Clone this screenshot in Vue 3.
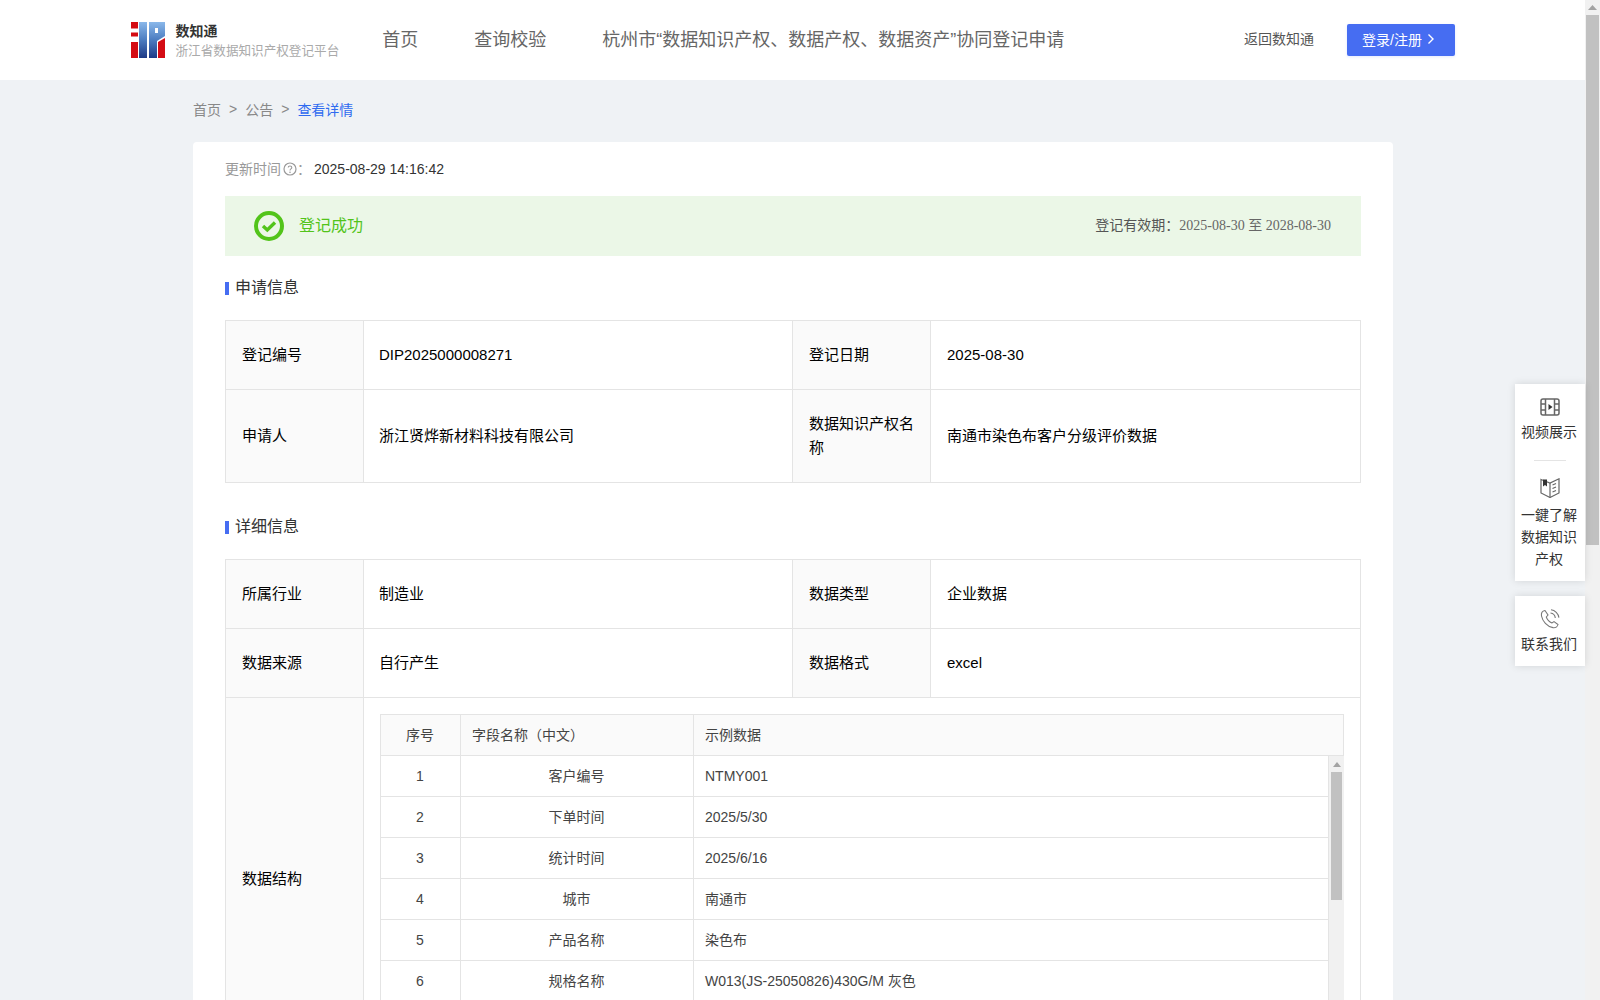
<script setup>
const nav = ['首页', '查询校验', '杭州市“数据知识产权、数据产权、数据资产”协同登记申请']
const fields = [
  ['1', '客户编号', 'NTMY001'],
  ['2', '下单时间', '2025/5/30'],
  ['3', '统计时间', '2025/6/16'],
  ['4', '城市', '南通市'],
  ['5', '产品名称', '染色布'],
  ['6', '规格名称', 'W013(JS-25050826)430G/M 灰色'],
  ['', '', '']
]
</script>

<template>
  <div class="shell">
    <div class="page">
      <header class="topbar">
        <div class="brand">
          <svg class="logo" viewBox="0 0 34 36" width="34" height="36">
            <defs>
              <linearGradient id="lg" x1="0" y1="0" x2="0" y2="1">
                <stop offset="0" stop-color="#8ab8ea" />
                <stop offset="0.5" stop-color="#4c7cc0" />
                <stop offset="1" stop-color="#1d3a86" />
              </linearGradient>
            </defs>
            <rect x="0" y="0" width="7" height="6.5" fill="#d40c14" />
            <rect x="0" y="10.5" width="7" height="4" fill="#d40c14" />
            <rect x="0" y="20" width="7" height="16" fill="#d40c14" />
            <rect x="8" y="0" width="8" height="36" fill="url(#lg)" />
            <path d="M18 0H34V14L26 19V36H18Z" fill="url(#lg)" />
            <rect x="24" y="6" width="3" height="5" fill="#fff" />
            <path d="M27 36V20L34 16V36Z" fill="#d40c14" />
          </svg>
          <div class="brand-text">
            <div class="brand-name">数知通</div>
            <div class="brand-sub">浙江省数据知识产权登记平台</div>
          </div>
        </div>
        <nav class="nav">
          <span v-for="n in nav" :key="n" class="nav-item">{{ n }}</span>
        </nav>
        <span class="back">返回数知通</span>
        <button class="login"><span>登录/注册</span>
          <svg width="8" height="12" viewBox="0 0 8 12"><path d="M1.5 1.5L6 6L1.5 10.5" fill="none" stroke="#fff" stroke-width="1.4" /></svg>
        </button>
      </header>

      <main class="content">
        <div class="crumbs">
          <span>首页</span><i>&gt;</i><span>公告</span><i>&gt;</i><span class="cur">查看详情</span>
        </div>
        <section class="card">
          <div class="updated">
            <span class="muted">更新时间</span>
            <svg class="help" width="14" height="14" viewBox="0 0 14 14">
              <circle cx="7" cy="7" r="6" fill="none" stroke="#999" stroke-width="1.2" />
              <path d="M5.2 5.6C5.2 3.4 8.8 3.5 8.8 5.5C8.8 6.9 7 6.8 7 8.4" fill="none" stroke="#999" stroke-width="1.1" />
              <circle cx="7" cy="10.2" r="0.8" fill="#999" />
            </svg>
            <span class="muted">：</span>
            <span class="time">2025-08-29 14:16:42</span>
          </div>

          <div class="status">
            <svg width="30" height="30" viewBox="0 0 30 30">
              <circle cx="15" cy="15" r="13" fill="none" stroke="#52c41a" stroke-width="4" />
              <path d="M9 15L13.3 19L21 11.5" fill="none" stroke="#52c41a" stroke-width="3.4" />
            </svg>
            <span class="status-text">登记成功</span>
            <span class="validity">登记有效期：<span class="serif">2025-08-30 至 2028-08-30</span></span>
          </div>

          <h3 class="sec first">申请信息</h3>
          <div class="grid">
            <div class="lab h69">登记编号</div><div class="val">DIP2025000008271</div>
            <div class="lab">登记日期</div><div class="val end">2025-08-30</div>
            <div class="lab h93">申请人</div><div class="val">浙江贤烨新材料科技有限公司</div>
            <div class="lab">数据知识产权名称</div><div class="val end">南通市染色布客户分级评价数据</div>
          </div>

          <h3 class="sec second">详细信息</h3>
          <div class="grid">
            <div class="lab h69">所属行业</div><div class="val">制造业</div>
            <div class="lab">数据类型</div><div class="val end">企业数据</div>
            <div class="lab h69">数据来源</div><div class="val">自行产生</div>
            <div class="lab">数据格式</div><div class="val end">excel</div>
            <div class="lab">数据结构</div>
            <div class="val wide">
              <div class="inner">
                <div class="inner-head">
                  <div class="c1">序号</div><div class="c2 left">字段名称（中文）</div><div class="c3">示例数据</div>
                </div>
                <div class="inner-body">
                  <div class="inner-rows">
                    <div v-for="(r, i) in fields" :key="i" class="inner-row">
                      <div class="c1">{{ r[0] }}</div><div class="c2">{{ r[1] }}</div><div class="c3">{{ r[2] }}</div>
                    </div>
                  </div>
                  <div class="mini-bar">
                    <svg class="mini-arrow" width="8" height="5" viewBox="0 0 8 5"><path d="M4 0L8 5H0Z" fill="#a3a3a3" /></svg>
                    <div class="mini-thumb"></div>
                  </div>
                </div>
              </div>
            </div>
          </div>
        </section>
      </main>
    </div>

    <aside class="scrollbar">
      <svg class="arrow" width="9" height="5" viewBox="0 0 9 5"><path d="M4.5 0L9 5H0Z" fill="#a3a3a3" /></svg>
      <div class="thumb"></div>
    </aside>

    <div class="float">
      <div class="float-box">
        <div class="float-item first">
          <svg width="20" height="20" viewBox="0 0 20 20" fill="none" stroke="#666" stroke-width="1.5">
            <rect x="1" y="2" width="18" height="16" rx="2" />
            <path d="M5.5 2V18M14.5 2V18M1 7H5.5M1 13H5.5M14.5 7H19M14.5 13H19" />
            <path d="M8.5 7L12.5 10L8.5 13Z" fill="#333" stroke="none" />
          </svg>
          <span>视频展示</span>
        </div>
        <div class="float-line"></div>
        <div class="float-item tall">
          <svg width="20" height="20" viewBox="0 0 20 20" fill="none" stroke="#666" stroke-width="1.2">
            <path d="M1 1.5L10 5L19 .8V15L10 19.5L1 15Z" />
            <path d="M10 5V19.5M12.5 7L16 5.5M12.5 10.5L16 9M12.5 14L16 12.5" />
            <path d="M3 1.5H7V8.5L5 7L3 8.5Z" fill="#333" stroke="none" />
          </svg>
          <span>一鍵了解</span><span>数据知识</span><span>产权</span>
        </div>
      </div>
      <div class="float-box">
        <div class="float-item contact">
          <svg width="20" height="20" viewBox="0 0 20 20" fill="none" stroke="#777" stroke-width="1.1">
            <path d="M5 1.5C2.5 2 1 4 1.5 7C2.5 12 7 17.5 13 18.6C15.5 19 17.6 17.5 18 15.5L14 12.6L12 14C9.5 13 7 10 6.3 8L8 6Z" />
            <path d="M10.5 4C13 4.3 15 6.2 15.3 9M11 .8C15 1.2 18.4 4.5 18.9 8.6" />
          </svg>
          <span>联系我们</span>
        </div>
      </div>
    </div>
  </div>
</template>

<style scoped>
.shell {
  position: relative;
  display: flex;
  height: 1000px;
  overflow: hidden;
  font-family: "Liberation Sans", "Noto Sans CJK SC", sans-serif;
  color: #333;
  background: #eff2f5;
}
.page { flex: 1; min-width: 0; overflow: hidden; }
.topbar {
  display: flex;
  align-items: center;
  height: 80px;
  background: #fff;
  padding: 0 130px 0 131px;
}
.brand { display: flex; align-items: center; gap: 10.5px; }
.logo { display: block; }
.brand-name { font-size: 14px; line-height: 20px; font-weight: 700; color: #333; }
.brand-sub { font-size: 12.6px; line-height: 18px; color: #aaa; white-space: nowrap; margin-top: 1px; }
.nav { display: flex; gap: 56px; margin-left: 43px; flex: 1; }
.nav-item { font-size: 18px; color: #666; white-space: nowrap; padding-bottom: 4px; }
.back { font-size: 14px; color: #555; margin-right: 33px; padding-bottom: 4px; }
.login {
  display: flex;
  align-items: center;
  justify-content: center;
  gap: 5px;
  width: 108px;
  height: 32px;
  padding: 0 5px 3px 0;
  border: 0;
  border-radius: 2px;
  background: #466df2;
  color: #fff;
  font: inherit;
  font-size: 14px;
  box-shadow: 0 1px 3px rgba(70, 109, 242, .15);
}
.content { padding: 0 192px 0 193px; }
.crumbs {
  display: flex;
  align-items: center;
  height: 58px;
  padding-bottom: 4px;
  font-size: 14px;
  color: #888;
}
.crumbs i { font-style: normal; margin: 0 8px; }
.cur { color: #2f6bf0; }
.card {
  background: #fff;
  border-radius: 4px 4px 0 0;
  padding: 0 32px 30px;
}
.updated {
  display: flex;
  align-items: center;
  height: 54px;
  font-size: 14px;
}
.muted { color: #999; padding-bottom: 2px; }
.help { margin-left: 2px; }
.time { color: #333; margin-left: 3px; }
.status {
  display: flex;
  align-items: center;
  height: 60px;
  padding: 0 30px 0 29px;
  background: #ebf7e7;
}
.status-text { margin-left: 15px; font-size: 16px; color: #52c41a; flex: 1; padding-bottom: 4px; }
.validity { font-size: 14px; color: #555; padding-bottom: 4px; }
.serif { font-family: "Liberation Serif", "Noto Sans CJK SC", serif; color: #666; }
.sec {
  display: flex;
  align-items: center;
  margin: 0;
  font-size: 16px;
  font-weight: 400;
  line-height: 22px;
  color: #333;
}
.sec::before {
  content: "";
  width: 4px;
  height: 13px;
  margin-right: 6px;
  background: #466df2;
}
.sec.first { margin: 21px 0 21px; }
.sec.second { margin: 33px 0 21px; }
.grid {
  display: grid;
  grid-template-columns: 138px 429px 138px 430px;
  border-top: 1px solid #e4e4e4;
  border-left: 1px solid #e4e4e4;
  font-size: 15px;
  color: #000;
}
.lab, .val {
  display: flex;
  align-items: center;
  box-sizing: border-box;
  min-height: 68px;
  padding: 0 15px;
  line-height: 24px;
  border-bottom: 1px solid #e4e4e4;
  border-right: 1px solid #e4e4e4;
}
.lab { background: #fafafa; padding-left: 16px; }
.val.end { padding-left: 16px; }
.grid .h69 { height: 69px; }
.grid .h93 { height: 93px; }
.wide { grid-column: span 3; padding: 16px; display: block; }
.inner { border: 1px solid #e4e4e4; border-bottom: 0; font-size: 14px; color: #444; }
.inner-head { display: flex; height: 40px; border-bottom: 1px solid #e4e4e4; background: #fafafa; }
.inner-body { display: flex; margin-right: -1px; }
.inner-rows { flex: 1; min-width: 0; }
.inner-row { display: flex; height: 40px; border-bottom: 1px solid #e4e4e4; }
.c1, .c2, .c3 { display: flex; align-items: center; box-sizing: border-box; }
.c1 { width: 80px; justify-content: center; padding-right: 1px; border-right: 1px solid #e4e4e4; }
.c2 { width: 233px; justify-content: center; padding-right: 1px; border-right: 1px solid #e4e4e4; }
.c2.left { justify-content: flex-start; padding-left: 11px; }
.c3 { flex: 1; padding-left: 11px; }
.inner-row .c3 { border-right: 1px solid #e4e4e4; }
.mini-bar {
  display: flex;
  flex-direction: column;
  align-items: center;
  width: 15px;
  background: #f1f1f1;
  padding-top: 6px;
}
.mini-arrow { display: block; }
.mini-thumb { width: 11px; height: 128px; margin-top: 5px; background: #c1c1c1; }
.scrollbar {
  flex: none;
  width: 15px;
  background: #f1f1f1;
  display: flex;
  flex-direction: column;
  align-items: center;
  padding-top: 5px;
}
.arrow { display: block; }
.thumb { width: 13px; height: 530px; margin-top: 5px; background: #c1c1c1; }
.float {
  position: absolute;
  left: 1515px;
  top: 384px;
  width: 70px;
  display: flex;
  flex-direction: column;
  gap: 15px;
}
.float-box { background: #fff; box-shadow: 0 0 8px rgba(0, 0, 0, .12); }
.float-item {
  display: flex;
  flex-direction: column;
  align-items: center;
  padding: 13px 0 12px;
  font-size: 14px;
  line-height: 22px;
  color: #333;
}
.float-item span { padding-right: 2px; }
.float-item svg { margin-bottom: 4px; }
.float-item.first { padding-bottom: 17px; }
.float-item.tall { padding: 17px 0 11px; }
.float-item.tall svg { margin-bottom: 6px; }
.float-item.contact { padding-bottom: 11px; }
.float-line { width: 32px; height: 1px; margin: 0 auto; background: #e4e4e4; }
</style>

<style>
html, body { margin: 0; overflow: hidden; }
</style>
